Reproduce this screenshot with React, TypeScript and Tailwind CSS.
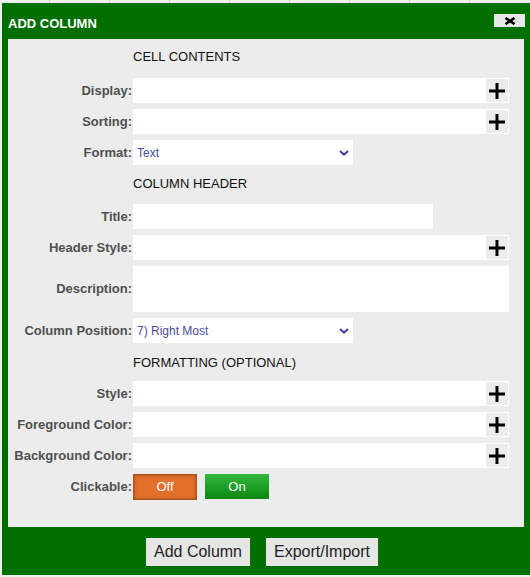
import React from 'react';

function PlusCell() {
  return (
    <div className="w-[24px] h-full bg-[#ececec] border border-white flex items-center justify-center">
      <svg width="16" height="16" viewBox="0 0 16 16">
        <rect x="6.5" y="0" width="3" height="16" fill="#000" />
        <rect x="0" y="6.5" width="16" height="3" fill="#000" />
      </svg>
    </div>
  );
}

function Chevron() {
  return (
    <svg width="10" height="6" viewBox="0 0 10 6" className="mr-[4px]">
      <path d="M1 1 L5 4.5 L9 1" stroke="#4a3f9f" strokeWidth="2.2" fill="none" />
    </svg>
  );
}

function Row({ label, children, className = 'h-[25px]' }: { label: string; children: React.ReactNode; className?: string }) {
  return (
    <div className={`flex items-center ${className}`}>
      <div className="w-[125px] text-right text-[13px] font-bold text-[#4f4f4f] pr-[1px] shrink-0">{label}</div>
      {children}
    </div>
  );
}

function Heading({ text, className = '' }: { text: string; className?: string }) {
  return (
    <div className={`h-[25px] flex items-center pl-[125px] text-[13px] text-[#111] ${className}`}>{text}</div>
  );
}

function PlusInput() {
  return (
    <div className="w-[376px] h-full bg-white flex justify-end">
      <PlusCell />
    </div>
  );
}

function Select({ value }: { value: string }) {
  return (
    <div className="w-[220px] h-full bg-white flex items-center justify-between pl-[4px] text-[12px] text-[#4b4b9e]">
      <span>{value}</span>
      <Chevron />
    </div>
  );
}

export default function App() {
  const gridLines = [50, 60, 60, 60, 60, 60, 60, 60];
  return (
    <div className="w-[530px] h-[577px] bg-[#f0f0f0] overflow-hidden font-['Liberation_Sans',Arial,sans-serif]">
      <div className="flex h-[3px]">
        {gridLines.map((w, i) => (
          <div key={i} className="h-full border-r border-[#cfcfcf]" style={{ width: w }} />
        ))}
      </div>
      <div className="ml-[2px] w-[528px] h-[572px] bg-[#006f00] flex flex-col">
        <div className="h-[36px] flex items-start justify-between shrink-0">
          <div className="mt-[13px] ml-[6px] text-[13px] leading-[16px] font-bold text-white">ADD COLUMN</div>
          <div className="mt-[11px] mr-[5px] w-[31px] h-[13px] bg-[#e8e8e8] flex items-center justify-center">
            <svg width="12" height="8" viewBox="0 0 12 8">
              <path d="M1.5 1 L10.5 7 M10.5 1 L1.5 7" stroke="#000" strokeWidth="2.6" />
            </svg>
          </div>
        </div>

        <div className="mx-[6px] h-[488px] bg-[#ececec] flex flex-col gap-[6px] pt-[5px]">
          <Heading text="CELL CONTENTS" />
          <Row label="Display:" className="h-[25px] mt-[3px]"><PlusInput /></Row>
          <Row label="Sorting:"><PlusInput /></Row>
          <Row label="Format:"><Select value="Text" /></Row>
          <Heading text="COLUMN HEADER" />
          <Row label="Title:" className="h-[25px] mt-[2px]">
            <div className="w-[300px] h-full bg-white" />
          </Row>
          <Row label="Header Style:"><PlusInput /></Row>
          <Row label="Description:" className="h-[46px]">
            <div className="w-[376px] h-full bg-white" />
          </Row>
          <Row label="Column Position:"><Select value="7) Right Most" /></Row>
          <Heading text="FORMATTING (OPTIONAL)" className="mt-[1px]" />
          <Row label="Style:"><PlusInput /></Row>
          <Row label="Foreground Color:"><PlusInput /></Row>
          <Row label="Background Color:"><PlusInput /></Row>
          <Row label="Clickable:" className="h-[26px]">
            <div className="flex gap-[8px] h-full">
              <div className="w-[64px] h-full bg-[#e2702c] border border-[#a9541f] shadow-[inset_0_0_3px_rgba(80,30,0,0.6)] flex items-center justify-center text-[13px] text-white">Off</div>
              <div className="w-[64px] h-[25px] bg-gradient-to-b from-[#2fb83a] to-[#0c870f] flex items-center justify-center text-[13px] text-white">On</div>
            </div>
          </Row>
        </div>

        <div className="flex gap-[16px] pl-[144px] mt-[11px]">
          <button className="w-[104px] h-[28px] bg-[#e6e6e6] text-[16px] text-[#222]">Add Column</button>
          <button className="w-[112px] h-[28px] bg-[#e6e6e6] text-[16px] text-[#222]">Export/Import</button>
        </div>
      </div>
    </div>
  );
}
